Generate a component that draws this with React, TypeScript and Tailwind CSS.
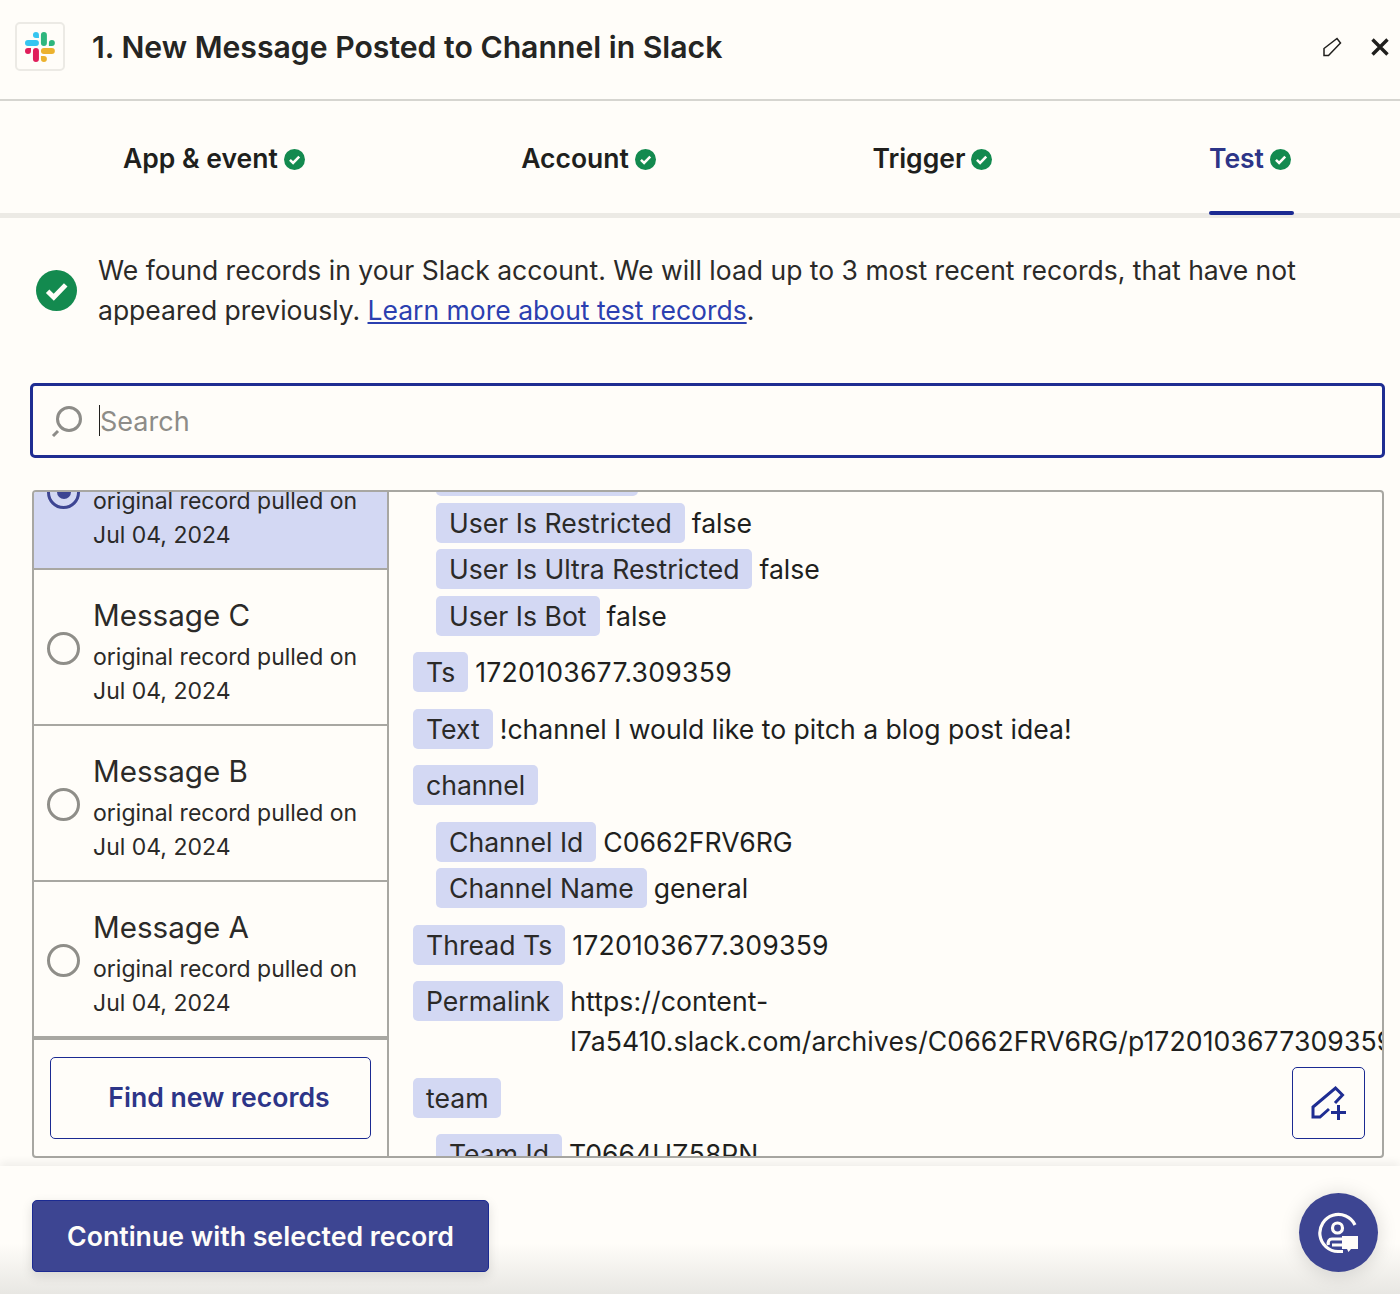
import React from "react";

const font = { fontFamily: '"Inter", "Liberation Sans", sans-serif' };

function Check({ size = 21, className = "" }: { size?: number; className?: string }) {
  return (
    <svg width={size} height={size} viewBox="0 0 24 24" className={`shrink-0 ${className}`}>
      <circle cx="12" cy="12" r="12" fill="#138a4f" />
      <path d="M6.8 12.4l3.6 3.5 7-7.2" fill="none" stroke="#fffdf9" strokeWidth="2.9" />
    </svg>
  );
}

function Slack() {
  return (
    <svg width="30" height="30" viewBox="0 0 54 54">
      <path d="M19.712.133a5.381 5.381 0 0 0-5.376 5.387 5.381 5.381 0 0 0 5.376 5.386h5.376V5.52A5.381 5.381 0 0 0 19.712.133m0 14.365H5.376A5.381 5.381 0 0 0 0 19.884a5.381 5.381 0 0 0 5.376 5.387h14.336a5.381 5.381 0 0 0 5.376-5.387 5.381 5.381 0 0 0-5.376-5.386" fill="#36C5F0" />
      <path d="M53.76 19.884a5.381 5.381 0 0 0-5.376-5.386 5.381 5.381 0 0 0-5.376 5.386v5.387h5.376a5.381 5.381 0 0 0 5.376-5.387m-14.336 0V5.52A5.381 5.381 0 0 0 34.048.133a5.381 5.381 0 0 0-5.376 5.387v14.364a5.381 5.381 0 0 0 5.376 5.387 5.381 5.381 0 0 0 5.376-5.387" fill="#2EB67D" />
      <path d="M34.048 54a5.381 5.381 0 0 0 5.376-5.387 5.381 5.381 0 0 0-5.376-5.386h-5.376v5.386A5.381 5.381 0 0 0 34.048 54m0-14.365h14.336a5.381 5.381 0 0 0 5.376-5.386 5.381 5.381 0 0 0-5.376-5.387H34.048a5.381 5.381 0 0 0-5.376 5.387 5.381 5.381 0 0 0 5.376 5.386" fill="#ECB22E" />
      <path d="M0 34.249a5.381 5.381 0 0 0 5.376 5.386 5.381 5.381 0 0 0 5.376-5.386v-5.387H5.376A5.381 5.381 0 0 0 0 34.25m14.336-.001v14.364A5.381 5.381 0 0 0 19.712 54a5.381 5.381 0 0 0 5.376-5.387V34.25a5.381 5.381 0 0 0-5.376-5.387 5.381 5.381 0 0 0-5.376 5.387" fill="#E01E5A" />
    </svg>
  );
}

function Tab({ label, active }: { label: string; active?: boolean }) {
  return (
    <div className={`relative flex h-full items-center gap-[6px] pt-[4px] text-[26.5px] font-semibold ${active ? "text-[#2d3588]" : "text-[#201f1d]"}`}>
      <span>{label}</span>
      <Check />
      {active && <div className="absolute bottom-[-2px] left-0 right-[-3px] h-[4px] rounded-full bg-[#1b2a92]" />}
    </div>
  );
}

function Row({ title, selected }: { title?: string; selected?: boolean }) {
  return (
    <div className={`flex h-[156px] shrink-0 items-center border-b-[2px] border-[#a8a7a2] pl-[13px] pt-[4px] ${selected ? "bg-[#d3d8f3]" : ""}`}>
      {selected ? (
        <div className="mb-[2px] flex h-[33px] w-[33px] shrink-0 items-center justify-center rounded-full border-[3px] border-[#3d4592]">
          <div className="h-[14px] w-[14px] rounded-full bg-[#3d4592]" />
        </div>
      ) : (
        <div className="mb-[2px] h-[33px] w-[33px] shrink-0 rounded-full border-[3px] border-[#8f8e89]" />
      )}
      <div className="ml-[13px] text-[#2b2a28]">
        <div className="text-[29.6px] leading-[51px]">{title}</div>
        <div className="text-[23px] leading-[33.5px]">
          original record pulled on
          <br />
          Jul 04, 2024
        </div>
      </div>
    </div>
  );
}

const chip = "shrink-0 rounded-[5px] bg-[#d3d8f3] px-[13px] text-[26.6px] leading-[40px] text-[#2b2a28]";
const value = "ml-[7px] whitespace-nowrap text-[26.6px] leading-[40px] text-[#201f1d]";

function Field({ k, v, nested, mt, num }: { k: string; v?: string; nested?: boolean; mt: string; num?: boolean }) {
  return (
    <div className={`flex items-start ${nested ? "ml-[23px]" : ""} ${mt}`}>
      <span className={chip}>{k}</span>
      {v && <span className={`${value} ${num ? "tracking-[0.25px]" : ""}`}>{v}</span>}
    </div>
  );
}

export default function App() {
  return (
    <div style={font} className="flex h-[1294px] w-[1400px] flex-col overflow-hidden bg-[#fffdf9] text-[#201f1d]">
      {/* Header */}
      <header className="flex h-[101px] shrink-0 items-center border-b-[2px] border-[#d6d5d0] pb-[6px] pl-[15px] pr-[11px]">
        <div className="flex h-[49px] w-[50px] items-center justify-center rounded-[5px] border-[2px] border-[#eceae5]">
          <Slack />
        </div>
        <h1 className="ml-[27px] flex-1 pt-[2px] text-[30.2px] font-semibold text-[#252523]">1. New Message Posted to Channel in Slack</h1>
        <svg width="20" height="20" viewBox="0 0 20 20" className="mr-[29px]" fill="none" stroke="#201f1d" strokeWidth="1.5">
          <path d="M2 11.5 15 1.5 18.5 6 6.5 18.5H2Z" />
        </svg>
        <svg width="18" height="18" viewBox="0 0 18 18" fill="none" stroke="#201f1d" strokeWidth="3.4">
          <path d="M1.5 1.5 16.5 16.5M16.5 1.5 1.5 16.5" />
        </svg>
      </header>

      {/* Tabs */}
      <nav className="flex h-[117px] shrink-0 items-stretch justify-between border-b-[5px] border-[#eceae5] pl-[123px] pr-[109px]">
        <Tab label="App & event" />
        <Tab label="Account" />
        <Tab label="Trigger" />
        <Tab label="Test" active />
      </nav>

      {/* Message */}
      <div className="mt-[32px] flex h-[80px] shrink-0 items-center pl-[36px]">
        <Check size={41} />
        <p className="ml-[21px] text-[26.5px] leading-[40px] text-[#2b2a28]">
          We found records in your Slack account. We will load up to 3 most recent records, that have not
          <br />
          appeared previously. <a className="text-[#2b3fb0] underline">Learn more about test records</a>.
        </p>
      </div>

      {/* Search */}
      <div className="ml-[30px] mt-[53px] flex h-[75px] w-[1355px] shrink-0 items-center rounded-[5px] border-[3px] border-[#1f2d92] pl-[18px]">
        <svg width="32" height="32" viewBox="0 0 32 32" fill="none" stroke="#8d8c88" strokeWidth="3">
          <circle cx="18" cy="14" r="11.5" />
          <path d="M7 26 2 31" />
        </svg>
        <div className="ml-[16px] h-[31px] w-[1px] bg-[#201f1d]" />
        <span className="pt-[3px] text-[27px] text-[#8d8c88]">Search</span>
      </div>

      {/* Panel */}
      <div className="relative mx-[32px] mt-[32px] flex h-[668px] w-[1352px] shrink-0 overflow-hidden rounded-[4px] border-[2px] border-[#a8a7a2]">
        <div className="flex w-[355px] shrink-0 flex-col border-r-[2px] border-[#a8a7a2]">
          <div className="-mt-[78px] flex flex-col">
            <Row title="Message D" selected />
            <Row title="Message C" />
            <Row title="Message B" />
            <Row title="Message A" />
          </div>
          <div className="border-t-[2px] border-[#a8a7a2] pl-[16px] pt-[17px]">
            <div className="flex h-[82px] w-[321px] items-center justify-center rounded-[5px] border-[1.5px] border-[#1b2a92] pl-[17px] text-[26.6px] font-semibold text-[#2d3588]">
              Find new records
            </div>
          </div>
        </div>
        <div className="min-w-0 flex-1 overflow-hidden pl-[24px]">
          <div className="-mt-[36px]">
            <Field k="User Is Admin" nested mt="mt-0" />
            <Field k="User Is Restricted" v="false" nested mt="mt-[6.5px]" />
            <Field k="User Is Ultra Restricted" v="false" nested mt="mt-[6.5px]" />
            <Field k="User Is Bot" v="false" nested mt="mt-[6.5px]" />
            <Field k="Ts" v="1720103677.309359" num mt="mt-[16.5px]" />
            <Field k="Text" v="!channel I would like to pitch a blog post idea!" mt="mt-[16.5px]" />
            <Field k="channel" mt="mt-[16.5px]" />
            <Field k="Channel Id" v="C0662FRV6RG" nested mt="mt-[16.5px]" />
            <Field k="Channel Name" v="general" nested mt="mt-[6.5px]" />
            <Field k="Thread Ts" v="1720103677.309359" num mt="mt-[16.5px]" />
            <div className="mt-[16.5px] flex items-start">
              <span className={chip}>Permalink</span>
              <span className={`${value} tracking-[0.1px]`}>
                https://content-
                <br />
                l7a5410.slack.com/archives/C0662FRV6RG/p1720103677309359
              </span>
            </div>
            <Field k="team" mt="mt-[16.5px]" />
            <Field k="Team Id" v="T0664UZ58PN" nested mt="mt-[16.5px]" />
          </div>
        </div>
        <div className="absolute bottom-[17px] right-[17px] flex h-[72px] w-[73px] items-center justify-center rounded-[5px] border-[1.5px] border-[#1b2a92] bg-[#fffdf9]">
          <svg width="36" height="36" viewBox="0 0 36 36" fill="none" stroke="#1f2d92" strokeWidth="3">
            <path d="M18 24 9 32H2V22L24.5 3 31.5 10 24 18" />
            <path d="M27.5 20V35M20 27.5H35" />
          </svg>
        </div>
      </div>

      {/* Footer */}
      <footer className="relative mt-[8px] flex min-h-0 flex-1 items-start justify-between bg-gradient-to-b from-[#fffdf9] from-60% to-[#e8e7e3] pl-[32px] pr-[22px] shadow-[0_-4px_8px_rgba(0,0,0,0.06)]">
        <div className="mt-[34px] flex h-[72px] w-[457px] items-center justify-center rounded-[5px] border border-[#1b2a92] bg-[#3d4592] text-[26.7px] font-semibold text-[#fffdf9] shadow-[0_4px_12px_rgba(0,0,0,0.12)]">
          Continue with selected record
        </div>
        <div className="mt-[27px] flex h-[79px] w-[79px] items-center justify-center rounded-full bg-[#3d4592] shadow-[0_2px_20px_rgba(0,0,0,0.15)]">
          <svg width="42" height="42" viewBox="0 0 42 42" fill="none" stroke="#fffdf9" strokeWidth="3.2">
            <path d="M37 13A18.5 18.5 0 1 0 20 39.5H25" />
            <circle cx="19.5" cy="16" r="5" />
            <path d="M24 27H14C11 27 9.5 29.5 10.5 33M14 33H24" />
            <path d="M24 24H40V37H33L30.5 40 29 37H24Z" fill="#fffdf9" stroke="none" />
          </svg>
        </div>
      </footer>
    </div>
  );
}
